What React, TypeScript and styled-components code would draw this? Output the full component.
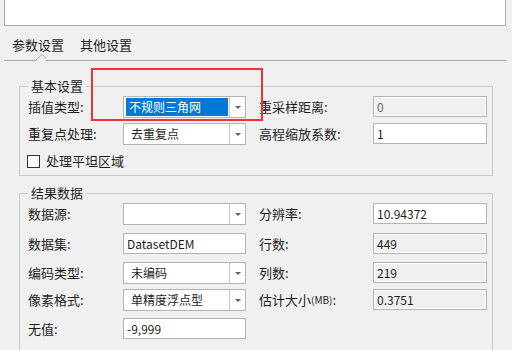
import React from "react"
import styled, { createGlobalStyle } from "styled-components"

const GlobalStyle = createGlobalStyle`
  html, body {
    margin: 0;
    padding: 0;
    background: #f0f0f0;
  }
  body {
    font-family: "Noto Sans CJK SC", "Noto Sans", sans-serif;
    color: #1e1e1e;
  }
`

const Page = styled.div`
  position: relative;
  width: 512px;
  height: 350px;
  overflow: hidden;
  background: #f0f0f0;
`

const TopBox = styled.div`
  margin: 0 6px 0 4px;
  height: 25px;
  background: #fff;
  border: 1px solid #a9a9a9;
  border-top: none;
`

const TabStrip = styled.div`
  position: relative;
  display: flex;
  align-items: center;
  margin: 0 6px 0 4px;
  height: 34px;
  padding-top: 4px;
  box-sizing: border-box;
  border-bottom: 1px solid #a9a9a9;
  height: 35px;
`

const Tab = styled.div`
  padding: 0 8px;
  font-size: 13px;
  line-height: 18px;
`

const Caret = styled.svg`
  position: absolute;
  left: 26px;
  bottom: -1px;
`

const Group = styled.fieldset`
  margin: 0 0 0 19px;
  padding: 0;
  width: 474px;
  box-sizing: border-box;
  border: 1px solid #c8c8c8;
  min-width: 0;
`

const Legend = styled.legend`
  margin-left: 8px;
  padding: 0 3px;
  font-size: 13px;
  line-height: 14px;
  height: 14px;
`

const FormGrid = styled.div<{ $rows: string; $bottom: number }>`
  display: grid;
  grid-template-columns: 95px 123px 13px 114px 114px;
  grid-template-rows: ${({ $rows }) => $rows};
  align-items: start;
  padding: 3px 0 ${({ $bottom }) => $bottom}px 8px;
`

const Label = styled.div<{ $col?: number }>`
  grid-column: ${({ $col }) => $col ?? 1};
  height: 21px;
  display: flex;
  align-items: center;
  font-size: 13px;
  line-height: 16px;
  white-space: nowrap;
`

const Small = styled.span`
  font-size: 10px;
`

const Combo = styled.div`
  grid-column: 2;
  display: flex;
  height: 22px;
  box-sizing: border-box;
  background: #fff;
  border: 1px solid #b4b4b4;
`

const ComboValue = styled.div<{ $selected?: boolean }>`
  flex: 1;
  display: flex;
  align-items: center;
  margin: 1px 1px 1px 2px;
  padding-left: ${({ $selected }) => ($selected ? "3px" : "5px")};
  font-size: 12px;
  line-height: 16px;
  background: ${({ $selected }) => ($selected ? "#0078d7" : "transparent")};
  color: ${({ $selected }) => ($selected ? "#fff" : "#1e1e1e")};
`

const ComboButton = styled.div`
  width: 15px;
  border-left: 1px solid #c8c8c8;
  display: flex;
  align-items: center;
  justify-content: center;
`

const Arrow = styled.div`
  width: 0;
  height: 0;
  border-left: 3px solid transparent;
  border-right: 3px solid transparent;
  border-top: 3px solid #606060;
`

const TextBox = styled.div<{ $col?: number; $disabled?: boolean; $dim?: boolean }>`
  grid-column: ${({ $col }) => $col ?? 2};
  height: 21px;
  box-sizing: border-box;
  display: flex;
  align-items: center;
  padding-left: 3px;
  font-size: 12px;
  line-height: 16px;
  background: ${({ $disabled }) => ($disabled ? "#f0f0f0" : "#fff")};
  border: 1px solid #b4b4b4;
  box-shadow: inset 0 0 0 1px #fff;
  color: ${({ $dim }) => ($dim ? "#6d6d6d" : "#1e1e1e")};
`

const CheckRow = styled.label`
  grid-column: 1 / span 3;
  height: 22px;
  display: flex;
  align-items: center;
  gap: 6px;
  margin-left: -1px;
  font-size: 13px;
  line-height: 16px;
`

const CheckBox = styled.span`
  width: 13px;
  height: 13px;
  box-sizing: border-box;
  border: 1px solid #333;
  background: #fff;
`

const Spacer = styled.div`
  height: 10px;
`

const Highlight = styled.div`
  position: absolute;
  left: 91px;
  top: 68px;
  width: 172px;
  height: 53px;
  box-sizing: border-box;
  border: 2px solid #ec3535;
  pointer-events: none;
`

const Dropdown = ({ value, selected }: { value: string; selected?: boolean }) => (
  <Combo>
    <ComboValue $selected={selected}>{value}</ComboValue>
    <ComboButton>
      <Arrow />
    </ComboButton>
  </Combo>
)

export default function App() {
  return (
    <Page>
      <GlobalStyle />
      <TopBox />
      <TabStrip>
        <Tab>参数设置</Tab>
        <Tab>其他设置</Tab>
        <Caret width="16" height="8" viewBox="0 0 16 8">
          <polygon points="0,8 6,8 12,2 18,8" fill="#f0f0f0" />
          <polyline points="0,7.5 5.5,7.5 12,1.5 18.5,7.5" fill="none" stroke="#a9a9a9" strokeWidth="1" />
        </Caret>
      </TabStrip>

      <Spacer style={{ height: 18 }} />
      <Group>
        <Legend>基本设置</Legend>
        <FormGrid $rows="27px 27px 22px" $bottom={3}>
          <Label>插值类型:</Label>
          <Dropdown value="不规则三角网" selected />
          <Label $col={4}>重采样距离:</Label>
          <TextBox $col={5} $disabled $dim>0</TextBox>

          <Label>重复点处理:</Label>
          <Dropdown value="去重复点" />
          <Label $col={4}>高程缩放系数:</Label>
          <TextBox $col={5}>1</TextBox>

          <CheckRow>
            <CheckBox />
            处理平坦区域
          </CheckRow>
        </FormGrid>
      </Group>

      <Spacer />
      <Group>
        <Legend>结果数据</Legend>
        <FormGrid $rows="30px 29px 27px 29px 22px" $bottom={10}>
          <Label>数据源:</Label>
          <Dropdown value="" />
          <Label $col={4}>分辨率:</Label>
          <TextBox $col={5}>10.94372</TextBox>

          <Label>数据集:</Label>
          <TextBox>DatasetDEM</TextBox>
          <Label $col={4}>行数:</Label>
          <TextBox $col={5} $disabled>449</TextBox>

          <Label>编码类型:</Label>
          <Dropdown value="未编码" />
          <Label $col={4}>列数:</Label>
          <TextBox $col={5} $disabled>219</TextBox>

          <Label>像素格式:</Label>
          <Dropdown value="单精度浮点型" />
          <Label $col={4}>
            估计大小<Small>(MB)</Small>:
          </Label>
          <TextBox $col={5} $disabled>0.3751</TextBox>

          <Label>无值:</Label>
          <TextBox>-9,999</TextBox>
        </FormGrid>
      </Group>

      <Highlight />
    </Page>
  )
}
